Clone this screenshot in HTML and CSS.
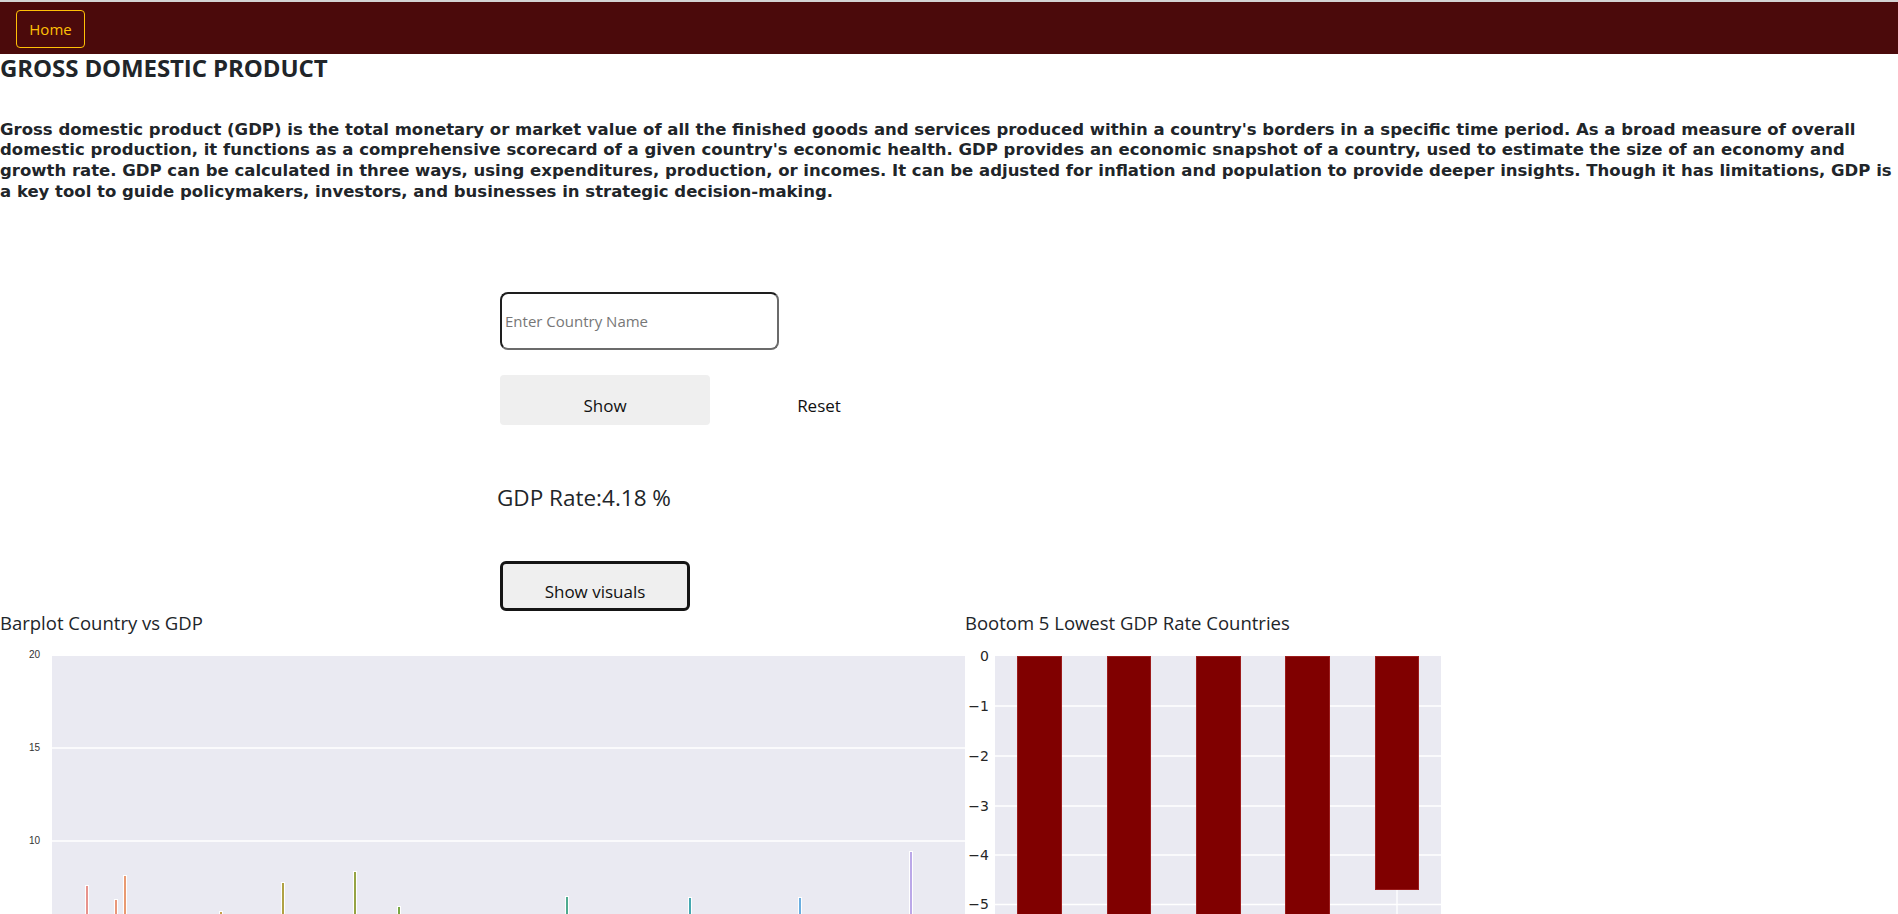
FILE: index.html
```html
<!DOCTYPE html>
<html lang="en">
<head>
<meta charset="utf-8">
<title>Gross Domestic Product</title>
<link rel="stylesheet" href="styles.css">
</head>
<body>
<nav class="navbar">
  <button class="btn-home" type="button">Home</button>
</nav>

<h4 class="page-title">GROSS DOMESTIC PRODUCT</h4>

<p class="intro">Gross domestic product (GDP) is the total monetary or market value of all the finished goods and services produced within a country's borders in a specific time period. As a broad measure of overall<br>domestic production, it functions as a comprehensive scorecard of a given country's economic health. GDP provides an economic snapshot of a country, used to estimate the size of an economy and<br>growth rate. GDP can be calculated in three ways, using expenditures, production, or incomes. It can be adjusted for inflation and population to provide deeper insights. Though it has limitations, GDP is<br>a key tool to guide policymakers, investors, and businesses in strategic decision-making.</p>

<section class="controls">
  <input class="country-input" type="text" placeholder="Enter Country Name">
  <div class="btn-row">
    <button class="btn-show" type="button">Show</button><button class="btn-reset" type="button">Reset</button>
  </div>
  <div class="rate">GDP Rate:4.18 %</div>
  <button class="btn-visuals" type="button">Show visuals</button>
</section>

<section class="charts">
  <div class="chart chart-left">
    <h5 class="chart-title">Barplot Country vs GDP</h5>
    <svg class="plot" width="965" height="300" viewBox="0 0 965 300">
      <rect x="52" y="21" width="913" height="320" fill="#eaeaf2"/>
      <line x1="52" x2="965" y1="113" y2="113" stroke="#fff" stroke-width="1.3"/>
      <line x1="52" x2="965" y1="206" y2="206" stroke="#fff" stroke-width="1.3"/>
      <g class="ytick-small" text-anchor="end">
        <text x="40" y="23">20</text>
        <text x="40" y="116">15</text>
        <text x="40" y="209">10</text>
      </g>
      <g stroke="#fff" stroke-width="1">
        <rect x="85.5" y="250.5" width="3" height="100" fill="#e8938c"/>
        <rect x="114.5" y="264.5" width="3" height="100" fill="#e9977a"/>
        <rect x="123.5" y="240.5" width="3" height="100" fill="#e99a72"/>
        <rect x="219.5" y="276.5" width="3" height="100" fill="#c4a24c"/>
        <rect x="281.5" y="247.5" width="3" height="100" fill="#b0a244"/>
        <rect x="353.5" y="236.5" width="3" height="100" fill="#96a444"/>
        <rect x="397.5" y="271.5" width="3" height="100" fill="#79a845"/>
        <rect x="565.5" y="261.5" width="3" height="100" fill="#4fab90"/>
        <rect x="688.5" y="262.5" width="3" height="100" fill="#45a8b0"/>
        <rect x="798.5" y="262.5" width="3" height="100" fill="#6aaee0"/>
        <rect x="909.5" y="216.5" width="3" height="100" fill="#bba8e8"/>
      </g>
    </svg>
  </div>
  <div class="chart chart-right">
    <h5 class="chart-title">Bootom 5 Lowest GDP Rate Countries</h5>
    <svg class="plot" width="480" height="300" viewBox="0 0 480 300">
      <rect x="30" y="21" width="446" height="320" fill="#eaeaf2"/>
      <g stroke="#fff" stroke-width="1.3">
        <line x1="30" x2="476" y1="71" y2="71"/>
        <line x1="30" x2="476" y1="121" y2="121"/>
        <line x1="30" x2="476" y1="171" y2="171"/>
        <line x1="30" x2="476" y1="220" y2="220"/>
        <line x1="30" x2="476" y1="269.5" y2="269.5"/>
        <line x1="75" x2="75" y1="21" y2="320"/>
        <line x1="164" x2="164" y1="21" y2="320"/>
        <line x1="253" x2="253" y1="21" y2="320"/>
        <line x1="342" x2="342" y1="21" y2="320"/>
        <line x1="432" x2="432" y1="21" y2="320"/>
      </g>
      <g fill="#800000" stroke="#9c1c1c" stroke-width="1">
        <rect x="52.5" y="21.5" width="44" height="300"/>
        <rect x="142.5" y="21.5" width="43" height="300"/>
        <rect x="231.5" y="21.5" width="44" height="300"/>
        <rect x="320.5" y="21.5" width="44" height="300"/>
        <rect x="410.5" y="21.5" width="43" height="233"/>
      </g>
      <g class="ytick" text-anchor="end">
        <text x="24" y="26">0</text>
        <text x="24" y="76">&#8722;1</text>
        <text x="24" y="126">&#8722;2</text>
        <text x="24" y="176">&#8722;3</text>
        <text x="24" y="225">&#8722;4</text>
        <text x="24" y="274">&#8722;5</text>
      </g>
    </svg>
  </div>
</section>
</body>
</html>
```

FILE: styles.css
```css
html, body {
  margin: 0;
  padding: 0;
}

body {
  font-family: "Open Sans", "Noto Sans", sans-serif;
  font-size: 16px;
  line-height: 1.5;
  color: #212529;
  background: #fff;
  overflow: hidden;
}

.navbar {
  border-top: 2px solid #d3d3d3;
  background: #4b0a0b;
  height: 54px;
  box-sizing: border-box;
  padding: 8px 16px;
  display: flex;
  align-items: flex-start;
}

.btn-home {
  font-family: inherit;
  font-size: 15px;
  line-height: 24px;
  height: 38px;
  width: 69px;
  padding: 6px 10px;
  color: #ffc107;
  background: transparent;
  border: 1px solid #ffc107;
  border-radius: 4px;
}

.page-title {
  margin: 0;
  font-size: 24px;
  font-weight: 700;
  line-height: 28.8px;
  letter-spacing: -0.1px;
}

.intro {
  margin: 37px 0 0;
  font-family: "DejaVu Sans", "Open Sans", sans-serif;
  font-size: 16.5px;
  font-weight: 700;
  line-height: 20.6px;
  white-space: nowrap;
}

.controls {
  margin: 90px 0 0 500px;
  display: flex;
  flex-direction: column;
  align-items: flex-start;
}

.country-input {
  box-sizing: border-box;
  width: 279px;
  height: 58px;
  padding: 1px 3px;
  font-family: inherit;
  font-size: 15px;
  border: 2px solid #6b6b6b;
  border-top-color: #1e1e1e;
  border-left-color: #1e1e1e;
  border-radius: 8px;
  background: #fff;
}

.country-input::placeholder {
  color: #777;
}

.btn-row {
  margin-top: 25px;
  display: flex;
  gap: 4px;
}

.btn-show,
.btn-reset {
  width: 210px;
  height: 50px;
  font-family: inherit;
  font-size: 17px;
  color: #111;
  border: none;
  border-radius: 4px;
  padding: 10px 0 0;
}

.btn-show {
  background: #efefef;
}

.btn-reset {
  background: transparent;
}

.rate {
  margin-top: 59px;
  margin-left: -3px;
  font-size: 22.5px;
  line-height: 28.8px;
}

.btn-visuals {
  margin-top: 48px;
  width: 190px;
  height: 50px;
  font-family: inherit;
  font-size: 17px;
  color: #111;
  background: #efefef;
  border: 3px solid #151515;
  border-radius: 6px;
  padding: 12px 0 0;
}

.charts {
  display: flex;
  align-items: flex-start;
}

.chart-left {
  width: 965px;
}

.chart-right {
  width: 480px;
}

.chart-title {
  margin: 0;
  font-size: 18.5px;
  font-weight: 400;
  line-height: 24px;
}

.plot {
  display: block;
}

.ytick-small {
  font-family: "Liberation Sans", Arial, sans-serif;
  font-size: 10px;
  fill: #333;
}

.ytick {
  font-family: "DejaVu Sans", sans-serif;
  font-size: 14px;
  fill: #262626;
}
```
